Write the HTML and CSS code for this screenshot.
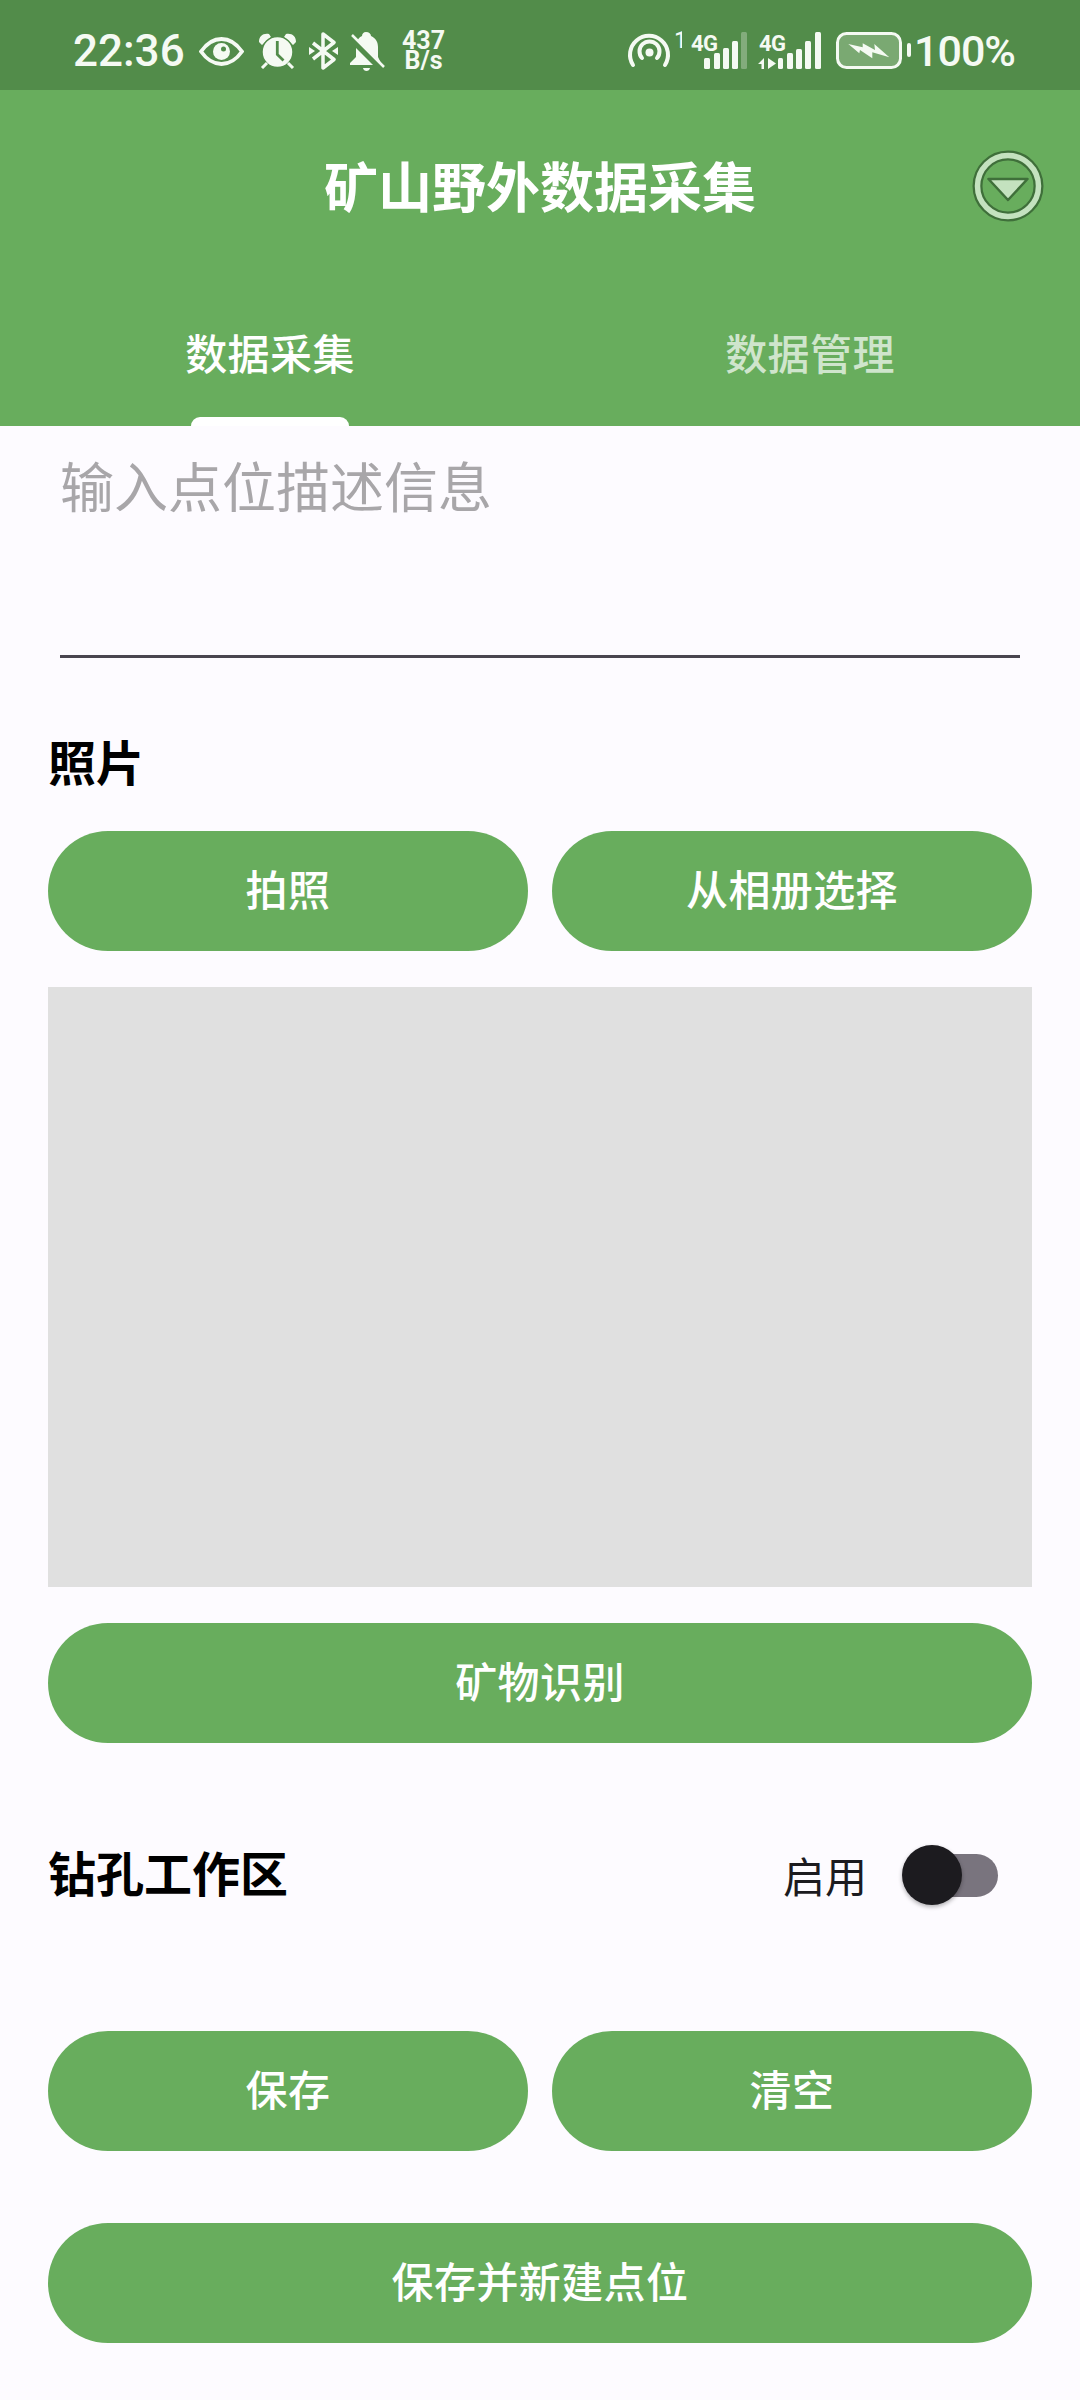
FILE: index.html
```html
<!DOCTYPE html>
<html lang="zh-CN">
<head>
  <meta charset="UTF-8">
  <meta name="viewport" content="width=device-width, initial-scale=1.0">
  <title>矿山野外数据采集</title>
  <link rel="stylesheet" href="styles.css">
</head>
<body>
  <div class="status-bar">
    <div class="status-left">
      <span class="clock">22:36</span>
      <svg class="ic-eye" width="45" height="29" viewBox="0 0 45 29"><path d="M2 14.500C8 6 15 2 22.500 2S37 6 43 14.500C37 23 30 27 22.500 27S8 23 2 14.500Z" fill="none" stroke="#f5faf3" stroke-width="3.800"/><circle cx="22.500" cy="14.500" r="8.500" fill="#f5faf3"/><circle cx="24.500" cy="12" r="2.500" fill="#528c4a"/></svg>
      <svg class="ic-alarm" width="37" height="36" viewBox="0 0 37 36"><path d="M0 9C0 3 4 0 10 1L12 4L3 12ZM37 9C37 3 33 0 27 1L25 4L34 12Z" fill="#f5faf3"/><circle cx="18.500" cy="19" r="15.500" fill="#f5faf3" stroke="#528c4a" stroke-width="1.500"/><path d="M18.300 8V21.500L24.500 27.500" fill="none" stroke="#528c4a" stroke-width="2.800"/><path d="M8 30L3 35M29 30L34 35" stroke="#f5faf3" stroke-width="3"/></svg>
      <svg class="ic-bt" width="29" height="38" viewBox="0 0 29 38"><path d="M4 11L25 27.500L14 36V2L25 10.500L4 27" fill="none" stroke="#f5faf3" stroke-width="3.500" stroke-linejoin="round"/><path d="M0 15L6 19L0 23ZM29 15L23 19L29 23Z" fill="#f5faf3"/></svg>
      <svg class="ic-bell" width="35" height="40" viewBox="0 0 35 40"><path d="M16 0C13.500 0 12 2 12 4C8 6 6 10 6 15V25L0 31V33H31V31L28 25V15C28 9 25 6 21 4C21 2 19 0 16 0ZM13 36H20C19.500 40 13.500 40 13 36Z" fill="#f5faf3"/><path d="M-1 4L32 37" stroke="#528c4a" stroke-width="7"/><path d="M2 3L34 35" stroke="#f5faf3" stroke-width="2.500"/></svg>
      <span class="net-speed"><span class="speed-line">437</span><span class="speed-line">B/s</span></span>
    </div>
    <div class="status-right">
      <svg class="ic-hotspot" width="55" height="40" viewBox="0 0 55 40"><path d="M6 34A19 19 0 1 1 38 34" fill="none" stroke="#f5faf3" stroke-width="4" stroke-linecap="round"/><path d="M15 27A10 10 0 1 1 30 27" fill="none" stroke="#f5faf3" stroke-width="4" stroke-linecap="round"/><circle cx="22.500" cy="21.500" r="4" fill="#f5faf3"/><text x="47" y="17" class="sim-no">1</text></svg>
      <svg class="ic-sim" width="56" height="40" viewBox="0 0 56 40"><text x="0" y="20" class="sim-type">4G</text><rect x="13" y="27" width="6" height="11" rx="1.500" fill="#f5faf3"/><rect x="23" y="22" width="6" height="16" rx="1.500" fill="#f5faf3"/><rect x="32" y="17" width="6" height="21" rx="1.500" fill="#f5faf3"/><rect x="41" y="10" width="6" height="28" rx="1.500" fill="#f5faf3"/><rect x="50" y="1" width="6" height="37" rx="1.500" fill="#f5faf3" opacity=".3"/></svg>
      <svg class="ic-sim-b" width="63" height="40" viewBox="0 0 63 40"><text x="1" y="20" class="sim-type">4G</text><path d="M0 33L6 27V38H3.500V33ZM10 27L18 32.500L10 38Z" fill="#f5faf3"/><rect x="20" y="27" width="5" height="11" rx="1.500" fill="#f5faf3"/><rect x="29" y="22" width="6" height="16" rx="1.500" fill="#f5faf3"/><rect x="38" y="18" width="6" height="20" rx="1.500" fill="#f5faf3"/><rect x="47" y="10" width="6" height="28" rx="1.500" fill="#f5faf3"/><rect x="57" y="1" width="6" height="37" rx="1.500" fill="#f5faf3"/></svg>
      <svg class="ic-battery" width="75" height="38" viewBox="0 0 75 38"><rect x="1.500" y="1.500" width="63" height="34" rx="9" fill="#7aa972" stroke="#f5faf3" stroke-width="3"/><path d="M12.300 12L26.700 15.300V11.300L39 18L38.300 12L53.300 25.300L36.300 20.300V26.300L24 18L23.300 21.300Z" fill="#f5faf3"/><rect x="71" y="11" width="4" height="14" rx="2" fill="#f5faf3"/></svg>
      <span class="battery-level">100%</span>
    </div>
  </div>

  <div class="header">
    <div class="toolbar">
      <h1 class="app-title">矿山野外数据采集</h1>
      <svg class="drop-btn" width="72" height="72" viewBox="0 0 72 72">
        <circle cx="36" cy="36" r="30.500" fill="none" stroke="#3f6f3a" stroke-width="10"/>
        <circle cx="36" cy="36" r="30.500" fill="none" stroke="#c4e2bf" stroke-width="5.500"/>
        <path d="M16.500 29H55.500L36 50Z" fill="#c4e2bf" stroke="#3f6f3a" stroke-width="2.500" stroke-linejoin="round"/>
      </svg>
    </div>
    <div class="tabs">
      <div class="tab tab-active">数据采集</div>
      <div class="tab">数据管理</div>
    </div>
  </div>

  <div class="content">
    <div class="desc-input">输入点位描述信息</div>

    <div class="section-title photo-title">照片</div>
    <div class="btn-row">
      <div class="btn">拍照</div>
      <div class="btn">从相册选择</div>
    </div>
    <div class="photo-box"></div>
    <div class="btn btn-identify">矿物识别</div>

    <div class="drill-row">
      <div class="section-title drill-title">钻孔工作区</div>
      <div class="drill-toggle">
        <span class="toggle-label">启用</span>
        <div class="switch"><div class="switch-thumb"></div></div>
      </div>
    </div>

    <div class="btn-row">
      <div class="btn">保存</div>
      <div class="btn">清空</div>
    </div>
    <div class="btn btn-new">保存并新建点位</div>
  </div>
</body>
</html>
```

FILE: styles.css
```css
* {
  box-sizing: border-box;
}

body {
  margin: 0;
  width: 1080px;
  height: 2400px;
  overflow: hidden;
  background: #fdfbff;
  font-family: "Noto Sans CJK SC", "Noto Sans", sans-serif;
}

/* status bar */
.status-bar {
  height: 90px;
  background: #528c4a;
  color: #f5faf3;
  padding: 12px 67px 0 73px;
  display: flex;
  justify-content: space-between;
  align-items: center;
  font-family: Roboto, "Noto Sans", sans-serif;
}

.status-left, .status-right {
  display: flex;
  align-items: center;
}

.clock {
  width: 111px;
  font-size: 44px;
  font-weight: 500;
  line-height: 50px;
}

.ic-eye { margin-left: 15px; }
.ic-alarm { margin-left: 15px; }
.ic-bt { margin-left: 13px; }
.ic-bell { margin-left: 12px; margin-top: 2px; }

.net-speed {
  margin-left: 16px;
  width: 45px;
  font-size: 25px;
  font-weight: 700;
  text-align: center;
}

.speed-line {
  display: block;
  height: 20px;
  line-height: 20px;
}

.ic-sim { margin-left: 9px; }
.ic-sim-b { margin-left: 11px; }
.ic-battery { margin-left: 15px; }

.sim-no {
  font: 500 24px Roboto, sans-serif;
  fill: #f5faf3;
}

.sim-type {
  font: 700 22px Roboto, sans-serif;
  letter-spacing: -0.5px;
  fill: #f5faf3;
}

.battery-level {
  margin-left: 3px;
  width: 99px;
  font-size: 43px;
  font-weight: 500;
  letter-spacing: -1px;
  line-height: 50px;
}

/* header */
.header {
  height: 336px;
  background: #68ad5d;
  color: #fff;
}

.toolbar {
  height: 192px;
  padding-bottom: 2px;
  position: relative;
  display: flex;
  align-items: center;
  justify-content: center;
}

.app-title {
  margin: 0;
  font-size: 54px;
  font-weight: 700;
  line-height: 72px;
}

.drop-btn {
  position: absolute;
  right: 36px;
  top: 60px;
}

.tabs {
  height: 144px;
  display: flex;
}

.tab {
  flex: 1;
  padding-bottom: 6px;
  display: flex;
  align-items: center;
  justify-content: center;
  position: relative;
  font-size: 42px;
  font-weight: 500;
  letter-spacing: 0.4px;
  color: rgba(255, 255, 255, 0.7);
}

.tab-active {
  color: #fff;
}

.tab-active::after {
  content: "";
  position: absolute;
  left: 191px;
  bottom: 0;
  width: 158px;
  height: 9px;
  background: #fff;
  border-radius: 9px 9px 0 0;
}

/* form */
.content {
  padding: 0 48px;
}

.desc-input {
  margin: 0 12px;
  height: 232px;
  padding-top: 19px;
  border-bottom: 3px solid #49454f;
  font-size: 54px;
  line-height: 80px;
  color: #a8a6a9;
}

.section-title {
  font-size: 48px;
  font-weight: 700;
  line-height: 64px;
  color: #000;
}

.photo-title {
  margin-top: 70px;
  margin-bottom: 39px;
}

.btn-row {
  display: flex;
  gap: 24px;
}

.btn {
  flex: 1;
  height: 120px;
  padding-bottom: 8px;
  border-radius: 60px;
  background: #68ad5d;
  color: #fff;
  display: flex;
  align-items: center;
  justify-content: center;
  font-size: 42px;
  font-weight: 500;
  letter-spacing: 0.4px;
}

.photo-box {
  height: 600px;
  margin-top: 36px;
  background: #e0e0e0;
}

.btn-identify {
  margin-top: 36px;
}

.drill-row {
  height: 288px;
  padding-bottom: 24px;
  display: flex;
  align-items: center;
  justify-content: space-between;
}

.drill-title {
  padding-bottom: 8px;
}

.drill-toggle {
  display: flex;
  align-items: center;
  gap: 47px;
  margin-right: 34px;
}

.toggle-label {
  padding-bottom: 2px;
  font-size: 42px;
  color: #1c1b1f;
}

.switch {
  position: relative;
  width: 84px;
  height: 43px;
  border-radius: 22px;
  background: #79747e;
}

.switch-thumb {
  position: absolute;
  left: -12px;
  top: -9px;
  width: 60px;
  height: 60px;
  border-radius: 50%;
  background: #1c1b1f;
  box-shadow: 0 2px 4px rgba(0, 0, 0, 0.3);
}

.btn-new {
  margin-top: 72px;
}
```
